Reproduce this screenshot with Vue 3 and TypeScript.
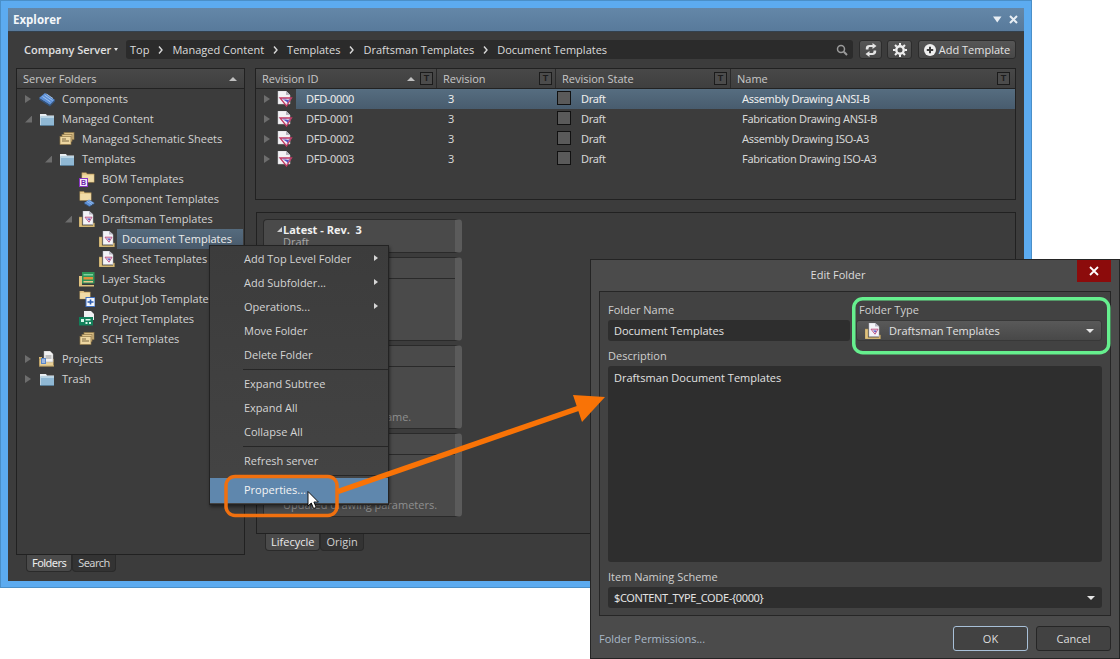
<script setup lang="ts">
interface TreeRow { label: string; depth: number; arrow: '' | 'r' | 'd'; icon: string; selected?: boolean }
const tree: TreeRow[] = [
  { label: 'Components', depth: 0, arrow: 'r', icon: 'chip' },
  { label: 'Managed Content', depth: 0, arrow: 'd', icon: 'blue' },
  { label: 'Managed Schematic Sheets', depth: 1, arrow: '', icon: 'stack' },
  { label: 'Templates', depth: 1, arrow: 'd', icon: 'blue' },
  { label: 'BOM Templates', depth: 2, arrow: '', icon: 'bom' },
  { label: 'Component Templates', depth: 2, arrow: '', icon: 'fchip' },
  { label: 'Draftsman Templates', depth: 2, arrow: 'd', icon: 'fdoc' },
  { label: 'Document Templates', depth: 3, arrow: '', icon: 'fdoc', selected: true },
  { label: 'Sheet Templates', depth: 3, arrow: '', icon: 'fdoc' },
  { label: 'Layer Stacks', depth: 2, arrow: '', icon: 'layer' },
  { label: 'Output Job Templates', depth: 2, arrow: '', icon: 'output' },
  { label: 'Project Templates', depth: 2, arrow: '', icon: 'project' },
  { label: 'SCH Templates', depth: 2, arrow: '', icon: 'stack' },
  { label: 'Projects', depth: 0, arrow: 'r', icon: 'projects' },
  { label: 'Trash', depth: 0, arrow: 'r', icon: 'blue' }
]
const crumbs = ['Top', 'Managed Content', 'Templates', 'Draftsman Templates', 'Document Templates']
const revisions = [
  { id: 'DFD-0000', name: 'Assembly Drawing ANSI-B' },
  { id: 'DFD-0001', name: 'Fabrication Drawing ANSI-B' },
  { id: 'DFD-0002', name: 'Assembly Drawing ISO-A3' },
  { id: 'DFD-0003', name: 'Fabrication Drawing ISO-A3' }
]
const cols = [
  { label: 'Revision ID', sort: true },
  { label: 'Revision', sort: false },
  { label: 'Revision State', sort: false },
  { label: 'Name', sort: false }
]
const cards = ['', 'Updated template name.', 'Updated drawing parameters.']
const menu = [
  [
    { label: 'Add Top Level Folder', sub: true },
    { label: 'Add Subfolder...', sub: true },
    { label: 'Operations...', sub: true },
    { label: 'Move Folder', sub: false },
    { label: 'Delete Folder', sub: false }
  ],
  [
    { label: 'Expand Subtree', sub: false },
    { label: 'Expand All', sub: false },
    { label: 'Collapse All', sub: false }
  ],
  [{ label: 'Refresh server', sub: false }],
  [{ label: 'Properties...', sub: false, active: true }]
]
</script>

<template>
  <div class="stage">
    <svg class="defs" width="0" height="0" aria-hidden="true">
      <symbol id="i-blue" viewBox="0 0 16 16">
        <path d="M1 3h6l1 1.500h7V14H1z" fill="#e8eef2" />
        <rect x="1.500" y="5.500" width="13.500" height="8.500" fill="#8fb8d4" />
        <rect x="1.500" y="5.500" width="13.500" height="1.500" fill="#b9d5e6" />
        <path d="M1 14.500h14" stroke="#5a7f99" />
      </symbol>
      <symbol id="i-folder" viewBox="0 0 16 16">
        <path d="M1 3h5l1 1.500h8V14H1z" fill="#e6c98c" stroke="#a88a50" stroke-width=".6" />
        <rect x="1.500" y="6" width="13" height="7.500" fill="#f0dba8" />
      </symbol>
      <symbol id="i-chip" viewBox="0 0 16 16">
        <path d="M0 7l6-5 10 7-5 5z" fill="#5c8fd6" />
        <path d="M0 7l11 7v1.500L0 8.500zM16 9l-5 5v1.500l5-5z" fill="#33557f" />
        <path d="M3.500 5.500l8 5.500M5.500 4l8 5.500M7.500 3l6.500 4.500" stroke="#a9c8ee" stroke-width=".9" />
      </symbol>
      <symbol id="i-stack" viewBox="0 0 16 16">
        <rect x="5" y="1.500" width="10" height="7" fill="#d8bd84" stroke="#8f7748" stroke-width=".7" />
        <rect x="3" y="3.500" width="10" height="7" fill="#e3c88e" stroke="#8f7748" stroke-width=".7" />
        <rect x="1" y="5.500" width="11" height="8" fill="#eed7a2" stroke="#8f7748" stroke-width=".7" />
        <path d="M3 8h4M3 10h7" stroke="#7c6a45" />
      </symbol>
      <symbol id="i-bom" viewBox="0 0 16 16">
        <use href="#i-folder" x="2" y="-1" width="14" height="14" />
      </symbol>
      <symbol id="i-fchip" viewBox="0 0 16 16">
        <use href="#i-folder" x="0" y="-2" width="13" height="13" />
        <path d="M5 12l5-3.500 5.500 3.500-5 3.500z" fill="#5c8fd6" />
        <path d="M5 12l5.500 3.500V16L5 13zM15.500 12l-5 3.500V16l5-3z" fill="#33557f" />
        <path d="M8 10.500l5 3M9.500 9.500l5 3" stroke="#a9c8ee" stroke-width=".7" />
      </symbol>
      <symbol id="i-doc" viewBox="0 0 16 16">
        <path d="M1 0h8l4 4v9H1z" fill="#f3f3f6" stroke="#c9c9cf" stroke-width=".5" />
        <path d="M9 0v4h4z" fill="#b5b5bd" />
        <path d="M3 7h11.500l-5 8z" fill="#f3f0f6" stroke="#c23a62" stroke-width="1.300" />
        <path d="M6.500 8.700h5.500l-1.200 2.800z" fill="#5250bc" />
        <path d="M5.500 8h4M10 12.500l3-5" stroke="#7a4fb0" stroke-width=".8" />
      </symbol>
      <symbol id="i-fdoc" viewBox="0 0 16 16">
        <path d="M0 6h3v8.500h11V12h1.500v4H0z" fill="#e0c27f" stroke="#a38a52" stroke-width=".5" />
        <path d="M4 0h6l4 3.500V13.500H4z" fill="#f4f4f8" stroke="#b7b7c0" stroke-width=".5" />
        <path d="M10 0v3.500h4z" fill="#b9b9c4" />
        <path d="M6 6.200h7l-3 5z" fill="#f0eef6" stroke="#b8477a" stroke-width=".9" />
        <path d="M8 7.500h3.500l-1.200 2z" fill="#4d4cc0" />
      </symbol>
      <symbol id="i-layer" viewBox="0 0 16 16">
        <path d="M0 5h3v9h12v1.500H0z" fill="#e0c27f" />
        <rect x="3" y="1" width="12.500" height="11.500" fill="#2e9458" />
        <rect x="4.500" y="3" width="9.500" height="1.500" fill="#7fd19d" />
        <rect x="4.500" y="6" width="9.500" height="2.500" fill="#e08f3a" />
        <rect x="4.500" y="10" width="9.500" height="1.500" fill="#e9c98a" />
      </symbol>
      <symbol id="i-output" viewBox="0 0 16 16">
        <use href="#i-folder" x="0" y="-2.500" width="12" height="12" />
        <rect x="7" y="6.500" width="9" height="9" fill="#f3f6fb" stroke="#3e6fc0" />
        <path d="M8.500 11h6M11.500 8.500v5" stroke="#2a5ab0" stroke-width="1.600" />
      </symbol>
      <symbol id="i-project" viewBox="0 0 16 16">
        <path d="M5 0h7l3 3v6H5z" fill="#f0f0f2" />
        <rect x="0" y="6" width="14" height="8.500" fill="#12805a" />
        <rect x="2" y="8" width="3" height="3" fill="#d8f4e8" />
        <rect x="6.500" y="8" width="5" height="1.500" fill="#d8f4e8" />
        <rect x="6.500" y="11" width="2" height="2" fill="#d8f4e8" />
        <rect x="10" y="11" width="2" height="2" fill="#d8f4e8" />
      </symbol>
      <symbol id="i-projects" viewBox="0 0 16 16">
        <path d="M0 6h3v8h12v1.500H0z" fill="#dcbc78" />
        <rect x="0.500" y="8" width="14" height="7" fill="#e8cf96" stroke="#957c49" stroke-width=".5" />
        <path d="M5 0h6l3 3v8H5z" fill="#f3f3f3" stroke="#aaa" stroke-width=".5" />
        <path d="M6.500 5h6M6.500 7h6" stroke="#8f8f8f" />
        <rect x="2" y="7" width="5" height="6" fill="#5b86c8" />
        <path d="M3 9h3M3 11h3" stroke="#e3ecf8" />
      </symbol>
    </svg>

    <section class="explorer">
      <header class="titlebar">
        <span class="title">Explorer</span>
        <svg class="title-ic" width="9" height="7" viewBox="0 0 9 7"><path d="M0 .5h8.500L4.250 6.500z" fill="#e8eef4" /></svg>
        <svg class="title-ic close-ic" width="9" height="9" viewBox="0 0 9 9"><path d="M1 1l7 7M8 1L1 8" stroke="#e8eef4" stroke-width="2" /></svg>
      </header>

      <div class="body">
        <div class="toolbar">
          <span class="server">Company Server<i class="caret"></i></span>
          <div class="path">
            <template v-for="(c, i) in crumbs" :key="c">
              <span class="crumb">{{ c }}</span>
              <svg v-if="i < crumbs.length - 1" class="chev" width="5" height="8" viewBox="0 0 5 8"><path d="M1 .5L4 4 1 7.500" fill="none" stroke="#d8d8d8" stroke-width="1.400" /></svg>
            </template>
            <svg class="search" width="12" height="12" viewBox="0 0 12 12"><circle cx="5" cy="5" r="3.500" fill="none" stroke="#9a9a9a" stroke-width="1.500" /><path d="M7.800 7.800L11 11" stroke="#9a9a9a" stroke-width="2" /></svg>
          </div>
          <button class="tbtn refresh"><svg width="12" height="14" viewBox="0 0 12 14"><path d="M7.500 0l4 3-4 3V4H5C4 4 3.500 4.600 3.500 5.500V6.500H.8V5.200C.8 3.200 2.300 2 4.500 2h3zM4.500 14l-4-3 4-3v2H7c1 0 1.500-.6 1.500-1.500V7.500h2.700v1.300c0 2-1.500 3.200-3.700 3.200h-3z" fill="#e4e4e4" /></svg></button>
          <button class="tbtn gear"><svg width="14" height="14" viewBox="0 0 14 14"><circle cx="7" cy="7" r="3.700" fill="none" stroke="#eee" stroke-width="2.400" /><path d="M7 0v2.500M7 11.500V14M0 7h2.500M11.500 7H14M2 2l1.800 1.800M10.200 10.200L12 12M12 2l-1.800 1.800M3.800 10.200L2 12" stroke="#eee" stroke-width="2" /></svg></button>
          <button class="tbtn add"><svg width="12" height="12" viewBox="0 0 12 12"><circle cx="6" cy="6" r="6" fill="#efefef" /><path d="M2.800 6h6.400M6 2.800v6.400" stroke="#3c3c3c" stroke-width="2" /></svg>Add Template</button>
        </div>

        <div class="main">
          <div class="left">
            <div class="panel tree">
              <div class="phead"><span>Server Folders</span><i class="up"></i></div>
              <div
                v-for="r in tree"
                :key="r.label"
                class="trow"
                :style="{ paddingLeft: 3 + r.depth * 20 + 'px' }"
              >
                <span class="aslot"><i v-if="r.arrow === 'r'" class="ar"></i><i v-else-if="r.arrow === 'd'" class="ad"></i></span>
                <span class="iwrap">
                  <svg class="ticon" width="16" height="16"><use :href="'#i-' + r.icon" /></svg>
                  <b v-if="r.icon === 'bom'" class="bbadge">B</b>
                </span>
                <span class="tlabel" :class="{ sel: r.selected }">{{ r.label }}</span>
              </div>
            </div>
            <div class="tabs">
              <span class="tab on cond">Folders</span>
              <span class="tab cond">Search</span>
            </div>
          </div>

          <div class="right">
            <div class="panel table">
              <div class="thead">
                <div v-for="c in cols" :key="c.label" class="th">
                  <span class="thl">{{ c.label }}</span>
                  <i v-if="c.sort" class="up sort"></i>
                  <span class="tbox">T</span>
                </div>
              </div>
              <div v-for="(r, i) in revisions" :key="r.id" class="rrow">
                <div class="lead">
                  <i class="ar"></i>
                  <svg class="ticon docic" width="16" height="16"><use href="#i-doc" /></svg>
                </div>
                <div class="rcells" :class="{ rsel: i === 0 }">
                  <span class="rid">{{ r.id }}</span>
                  <span class="rrev">3</span>
                  <span class="rstate"><i class="sq"></i>Draft</span>
                  <span class="rname">{{ r.name }}</span>
                </div>
              </div>
            </div>

            <div class="panel lanes">
              <div class="card first">
                <div class="chead"><i class="ad small"></i><b>Latest - Rev.&nbsp; 3</b></div>
                <div class="csub">Draft</div>
              </div>
              <div v-for="(c, i) in cards" :key="i" class="card tall">
                <div class="cbar"></div>
                <div class="cbody">{{ c }}</div>
              </div>
            </div>
            <div class="tabs">
              <span class="tab on">Lifecycle</span>
              <span class="tab">Origin</span>
            </div>
          </div>
        </div>
      </div>
    </section>

    <nav class="menu">
      <template v-for="(g, gi) in menu" :key="gi">
        <div v-if="gi > 0" class="msep"></div>
        <div v-for="m in g" :key="m.label" class="mitem" :class="{ active: 'active' in m }">
          <span>{{ m.label }}</span>
          <i v-if="m.sub" class="msub"></i>
        </div>
      </template>
    </nav>

    <section class="dialog">
      <header class="dtitle">
        <span>Edit Folder</span>
        <button class="dclose"><svg width="10" height="10" viewBox="0 0 10 10"><path d="M1 1l8 8M9 1L1 9" stroke="#fff" stroke-width="1.800" /></svg></button>
      </header>
      <div class="dpanel">
        <div class="dgrid">
          <div>
            <label>Folder Name</label>
            <div class="field">Document Templates</div>
          </div>
          <div>
            <label class="lt">Folder Type</label>
            <div class="field combo">
              <svg class="ticon" width="16" height="16"><use href="#i-fdoc" /></svg>
              <span>Draftsman Templates</span>
              <i class="down"></i>
            </div>
          </div>
        </div>
        <label class="gap">Description</label>
        <div class="field area">Draftsman Document Templates</div>
        <label class="gap">Item Naming Scheme</label>
        <div class="field scheme"><span>$CONTENT_TYPE_CODE-{0000}</span><i class="down"></i></div>
      </div>
      <footer class="dfoot">
        <span class="perm">Folder Permissions...</span>
        <button class="dbtn ok">OK</button>
        <button class="dbtn">Cancel</button>
      </footer>
    </section>

    <svg class="overlay" width="1120" height="659" viewBox="0 0 1120 659">
      <rect x="226" y="476.500" width="111" height="39" rx="9" fill="none" stroke="#f0700f" stroke-width="3.500" />
      <path d="M338 491.500L585 406" stroke="#f97306" stroke-width="5.500" />
      <path d="M605 397L573 395L582 422z" fill="#f97306" />
      <rect x="853.750" y="298.750" width="255" height="54" rx="9" fill="none" stroke="#66ef8e" stroke-width="3.500" />
      <path d="M308 491.500v14.500l3.300-3 2.300 5.500 2.600-1.100-2.300-5.400h4.500z" fill="#fff" stroke="#000" stroke-width=".9" />
    </svg>
  </div>
</template>

<style>
html, body { margin: 0; background: #fff; }
</style>

<style scoped>
.stage {
  position: relative;
  width: 1120px;
  height: 659px;
  overflow: hidden;
  background: #fff;
  font-family: "Open Sans", "Noto Sans", sans-serif;
  font-size: 11px;
  color: #d6d6d6;
}
.defs { position: absolute; }
i { display: block; font-style: normal; }
button { font-family: inherit; color: inherit; margin: 0; padding: 0; }

.explorer {
  width: 1032px;
  height: 588px;
  box-sizing: border-box;
  border: 1px solid #4a8fc8;
  padding: 7px 7px 6px;
  background: #5cabf0;
  display: flex;
  flex-direction: column;
}
.titlebar {
  height: 24px;
  flex: none;
  display: flex;
  align-items: center;
  padding: 0 6px 0 5px;
  background: linear-gradient(#6487a8, #587a9b);
  border-bottom: 1px solid #33414e;
  box-sizing: border-box;
}
.title { flex: 1; color: #f4f7fa; font-weight: 700; font-size: 11.5px; line-height: 16px; }
.close-ic { margin-left: 7px; }

.body {
  flex: 1;
  background: #3c3c3c;
  padding: 8px 8px 0;
  display: flex;
  flex-direction: column;
  min-height: 0;
}
.toolbar { display: flex; align-items: stretch; height: 19px; flex: none; }
.server { width: 110px; flex: none; display: flex; align-items: center; font-weight: 600; padding-left: 8px; box-sizing: border-box; color: #e0e0e0; }
.caret { margin-left: 3px; border-top: 3px solid #e0e0e0; border-left: 2.500px solid transparent; border-right: 2.500px solid transparent; }
.path {
  width: 727px;
  flex: none;
  background: #2b2b2b;
  border-radius: 3px;
  display: flex;
  align-items: center;
  padding: 0 5px 0 4px;
  box-sizing: border-box;
  gap: 9px;
}
.crumb { color: #dcdcdc; }
.search { margin-left: auto; }
.tbtn {
  border: 1px solid #2c2c2c;
  border-radius: 3px;
  background: linear-gradient(#565656, #484848);
  display: flex;
  align-items: center;
  justify-content: center;
  box-sizing: border-box;
  font-size: 11px;
}
.refresh { width: 23px; margin-left: 6px; }
.gear { width: 25px; margin-left: 5px; }
.add { width: 98px; margin-left: 6px; gap: 3px; color: #e4e4e4; }

.main { flex: 1; display: flex; margin-top: 9px; gap: 10px; min-height: 0; }
.left { width: 229px; flex: none; display: flex; flex-direction: column; }
.right { width: 761px; flex: none; display: flex; flex-direction: column; }
.panel { border: 1px solid #212121; box-sizing: border-box; }
.tree { height: 487px; flex: none; background: #3c3c3c; }
.phead {
  height: 20px;
  box-sizing: border-box;
  display: flex;
  align-items: center;
  justify-content: space-between;
  padding: 0 6px;
  background: linear-gradient(#484848, #3f3f3f);
  border-bottom: 1px solid #222;
  color: #c8c8c8;
}
.up { border-bottom: 4px solid #c0c0c0; border-left: 4px solid transparent; border-right: 4px solid transparent; margin-right: 1px; }
.trow { height: 20px; display: flex; align-items: center; }
.aslot { width: 19px; flex: none; display: flex; justify-content: flex-start; padding-left: 5px; box-sizing: border-box; }
.ar { width: 0; height: 0; border-left: 6px solid #6d6d6d; border-top: 4px solid transparent; border-bottom: 4px solid transparent; }
.ad { width: 7px; height: 7px; background: #6d6d6d; clip-path: polygon(100% 0, 100% 100%, 0 100%); }
.ad.small { background: #cfcfcf; width: 5px; height: 5px; margin-right: 1px; }
.iwrap { position: relative; width: 16px; height: 16px; flex: none; }
.ticon { flex: none; overflow: visible; display: block; }
.bbadge {
  position: absolute;
  left: 0;
  bottom: 0;
  width: 9px;
  height: 9px;
  box-sizing: border-box;
  border: 1px solid #8a35c4;
  background: #f1e8f8;
  color: #6d1fa8;
  font: 700 7px/7px "Liberation Sans", sans-serif;
  text-align: center;
}
.tlabel {
  flex: 1;
  height: 20px;
  line-height: 20px;
  padding-left: 5px;
  margin-left: 2px;
  margin-right: 1px;
  white-space: nowrap;
  overflow: hidden;
  color: #d2d2d2;
}
.sel { background: linear-gradient(#556b7e, #48596a); color: #ececec; }

.tabs { display: flex; flex: none; height: 17px; padding-left: 10px; }
.tab {
  border: 1px solid #2a2a2a;
  border-top: 0;
  border-radius: 0 0 4px 4px;
  padding: 0 5px;
  line-height: 16px;
  background: #333;
  color: #cfcfcf;
}
.tab.on { background: #4a4a4a; color: #ececec; }
.cond { font-family: "Noto Sans", sans-serif; letter-spacing: -.55px; }

.table { height: 132px; flex: none; background: #3c3c3c; }
.thead {
  display: grid;
  grid-template-columns: 181px 119px 175px 1fr;
  height: 20px;
  box-sizing: border-box;
  background: linear-gradient(#484848, #3f3f3f);
  border-bottom: 1px solid #222;
}
.th { display: flex; align-items: center; padding-left: 6px; color: #c8c8c8; border-right: 1px solid #2a2a2a; padding-right: 3px; }
.th:last-child { border-right: 0; padding-right: 5px; }
.thl { flex: 1; white-space: nowrap; }
.sort { margin-right: 5px; }
.tbox {
  width: 13px;
  height: 13px;
  box-sizing: border-box;
  border: 1px solid #1b1b1b;
  background: #4c4c4c;
  color: #1c1c1c;
  font: 700 9px/11px "Liberation Sans", sans-serif;
  text-align: center;
}
.rrow { height: 20px; display: flex; }
.lead { width: 40px; flex: none; display: flex; align-items: center; padding-left: 8px; padding-bottom: 1px; box-sizing: border-box; }
.docic { margin-left: 7px; }
.rcells {
  flex: 1;
  display: grid;
  grid-template-columns: 141px 119px 175px 1fr;
  align-items: center;
  box-sizing: border-box;
  padding-bottom: 2px;
  font-family: "Noto Sans", sans-serif;
  letter-spacing: -.3px;
  color: #d6d6d6;
}
.rsel { background: linear-gradient(#566d80, #485c6e); color: #eee; }
.rid { padding-left: 10px; white-space: nowrap; }
.rrev, .rname { padding-left: 11px; white-space: nowrap; }
.rstate { display: flex; align-items: center; padding-left: 1px; }
.sq { width: 14px; height: 14px; box-sizing: border-box; border: 1px solid #111; background: #5a5a5a; margin-right: 10px; }

.lanes {
  margin-top: 12px;
  margin-left: 1px;
  height: 322px;
  flex: none;
  background: #3c3c3c;
  padding: 6px 0 0 6px;
  display: flex;
  flex-direction: column;
  gap: 4px;
}
.card {
  width: 199px;
  box-sizing: border-box;
  border: 1px solid #2a2a2a;
  border-radius: 4px;
  background: #4a4a4a;
  border-right: 7px solid #5b5b5b;
  overflow: hidden;
}
.first { height: 34px; padding: 2px 0 0 13px; }
.chead { display: flex; align-items: center; color: #f0f0f0; line-height: 15px; }
.csub { padding-left: 6px; color: #a8a8a8; line-height: 10px; }
.tall { height: 84px; display: flex; flex-direction: column; }
.cbar { height: 20px; flex: none; border-bottom: 1px solid #2a2a2a; }
.cbody { margin-top: auto; padding: 0 0 4px 19px; color: #8f8f8f; white-space: nowrap; }

.menu {
  position: absolute;
  left: 209px;
  top: 245px;
  width: 180px;
  box-sizing: border-box;
  padding: 1px 0;
  background: linear-gradient(#3c3c3c, #444);
  border: 1px solid #232323;
  box-shadow: 1px 2px 3px rgba(0,0,0,.45);
}
.mitem { height: 24px; display: flex; align-items: center; padding: 0 10px 2px 34px; color: #d4d4d4; justify-content: space-between; box-sizing: border-box; }
.mitem.active { background: #5f87ad; color: #f4f4f4; height: 25px; }
.msub { border-left: 4px solid #d6d6d6; border-top: 3.500px solid transparent; border-bottom: 3.500px solid transparent; }
.msep { height: 5px; position: relative; }
.msep::after { content: ""; position: absolute; left: 33px; right: 0; top: 2px; height: 1px; background: #262626; }

.dialog {
  position: absolute;
  left: 590px;
  top: 259px;
  width: 530px;
  height: 400px;
  box-sizing: border-box;
  border: 1px solid #242424;
  background: #4b4b4b;
  display: flex;
  flex-direction: column;
  padding: 0 8px;
}
.dtitle { height: 31px; flex: none; display: flex; align-items: flex-start; color: #dcdcdc; box-sizing: border-box; }
.dtitle span { flex: 1; text-align: center; line-height: 29px; font-size: 11px; }
.dclose { width: 34px; height: 22px; border: 0; background: #8c0b0b; display: flex; align-items: center; justify-content: center; }
.dpanel {
  height: 325px;
  flex: none;
  box-sizing: border-box;
  border: 1px solid #262626;
  background: #424242;
  padding: 10px 8px 0;
}
.dgrid { display: grid; grid-template-columns: 242px 246px; column-gap: 6px; }
label { display: block; height: 16px; line-height: 16px; margin-bottom: 2px; color: #cfcfcf; }
.lt { padding-left: 3px; }
.gap { margin-top: 7px; }
.field {
  height: 21px;
  box-sizing: border-box;
  border-radius: 3px;
  background: #2e2e2e;
  padding: 0 6px;
  line-height: 21px;
  color: #e2e2e2;
  display: flex;
  align-items: center;
}
.combo { background: linear-gradient(#595959, #484848); padding-left: 8px; border: 1px solid #383838; }
.combo span { flex: 1; margin-left: 8px; }
.area { height: 196px; align-items: flex-start; padding-top: 1px; }
.scheme span { flex: 1; font-family: "Noto Sans", sans-serif; letter-spacing: -.35px; }
.down { border-top: 4px solid #e6e6e6; border-left: 4.500px solid transparent; border-right: 4.500px solid transparent; margin-right: 1px; }
.dfoot { flex: 1; display: flex; align-items: center; gap: 8px; padding-top: 2px; }
.perm { flex: 1; color: #a9b9c9; }
.dbtn {
  width: 75px;
  height: 25px;
  border-radius: 3px;
  border: 1px solid #262626;
  background: #424242;
  color: #dedede;
  font-size: 11px;
}
.ok { border-color: #a8c0d8; }

.overlay { position: absolute; left: 0; top: 0; pointer-events: none; }
</style>
